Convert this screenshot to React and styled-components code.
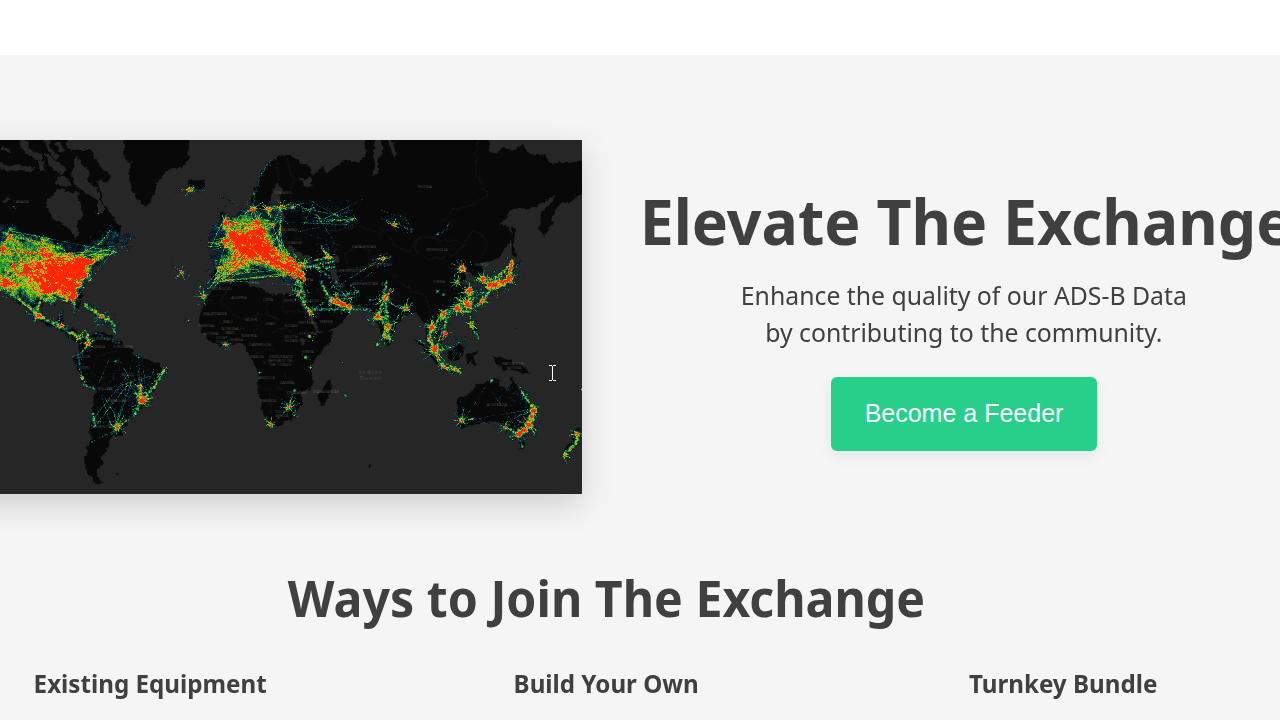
import React from 'react';
import styled, { createGlobalStyle } from 'styled-components';

const GlobalStyle = createGlobalStyle`
  html, body { margin: 0; padding: 0; overflow: hidden; background: #f5f5f5; }
  * { box-sizing: border-box; }
`;

const Page = styled.div`
  width: 100vw;
  height: 100vh;
  overflow: hidden;
  background: #f5f5f5;
  color: #404040;
  font-family: 'Noto Sans', 'Open Sans', sans-serif;
`;

const TopBar = styled.header`
  height: 55px;
  background: #ffffff;
`;

const Container = styled.main`
  width: 1369px;
  margin-left: -78px;
`;

const Hero = styled.section`
  display: flex;
  padding-top: 85px;
  height: 508px;
`;

const MapFrame = styled.figure`
  flex: none;
  width: 660px;
  height: 354px;
  margin: 0;
  padding-left: 78px;
  background: #262626;
  box-shadow: 0 10px 30px rgba(0, 0, 0, 0.16);

  svg { display: block; }
`;

const Pitch = styled.div`
  flex: none;
  width: 764px;
  padding-top: 36px;
  display: flex;
  flex-direction: column;
  align-items: center;
`;

const Title = styled.h1`
  margin: 0;
  font-size: 63.5px;
  line-height: 90px;
  font-weight: 700;
  white-space: nowrap;
  transform: translateX(2px) scaleX(0.957);
`;

const Lead = styled.p`
  margin: 11px 0 26px;
  font-size: 25px;
  line-height: 37px;
  text-align: center;
  transform: scaleX(0.992);
`;

const FeederButton = styled.button`
  width: 266px;
  height: 74px;
  border: 0;
  border-radius: 6px;
  background: #28cf8b;
  color: #ffffff;
  font: 25px/73px 'Liberation Sans', Arial, sans-serif;
  padding: 0 0 1px;
  box-shadow: 0 5px 14px rgba(40, 80, 120, 0.08);
`;

const SectionTitle = styled.h2`
  margin: 0;
  font-size: 50px;
  line-height: 70px;
  font-weight: 700;
  text-align: center;
  transform: scaleX(0.965);
`;

const Ways = styled.div`
  display: grid;
  grid-template-columns: repeat(3, 1fr);
  padding-top: 32px;
`;

const WayTitle = styled.h3`
  margin: 0;
  font-size: 25px;
  line-height: 36px;
  font-weight: 700;
  text-align: center;
  transform: scaleX(0.967);
`;

/* ---------- traffic heat map ---------- */

const W = 582;
const H = 354;
const TOP = 140;

function makeRandom(seed) {
  let s = seed;
  return () => {
    s = (s + 0x6d2b79f5) | 0;
    let t = Math.imul(s ^ (s >>> 15), 1 | s);
    t = (t + Math.imul(t ^ (t >>> 7), 61 | t)) ^ t;
    return ((t ^ (t >>> 14)) >>> 0) / 4294967296;
  };
}

// [value, points]
const AREAS = [
  [0.19, [[0, 222], [20, 228], [50, 238], [75, 246], [95, 240], [108, 225], [120, 234], [116, 246], [108, 258], [95, 272], [85, 285], [82, 303], [60, 300], [45, 300], [40, 315], [20, 303], [0, 285]]],
  [0.28, [[0, 238], [20, 238], [40, 241], [70, 254], [95, 254], [108, 250], [110, 256], [97, 263], [88, 278], [80, 292], [79, 304], [70, 300], [62, 296], [45, 297], [38, 302], [25, 296], [0, 290]]],
  [0.3, [[0, 275], [12, 283], [25, 266], [42, 256], [60, 255], [97, 256], [93, 266], [83, 275], [77, 288], [77, 304], [71, 303], [67, 296], [42, 295], [22, 286], [0, 287]]],
  [0.28, [[22, 270], [34, 264], [50, 260], [75, 258], [96, 258], [90, 268], [82, 275], [76, 288], [77, 304], [72, 303], [68, 294], [42, 292], [38, 280]]],
  [0.5, [[52, 264], [75, 259], [96, 258], [90, 268], [82, 276], [77, 284], [76, 302], [71, 302], [68, 290], [42, 290], [44, 280]]],
  [0.16, [[206, 232], [220, 214], [245, 207], [270, 205], [281, 210], [281, 235], [297, 262], [304, 272], [302, 286], [292, 284], [270, 276], [245, 278], [225, 280], [205, 302], [202, 296], [212, 270], [206, 250]]],
  [0.26, [[220, 226], [226, 218], [240, 216], [258, 214], [274, 226], [276, 240], [296, 262], [302, 276], [294, 278], [275, 270], [252, 268], [236, 272], [220, 280], [214, 280], [216, 268], [226, 254], [226, 240]]],
  [0.3, [[225, 228], [232, 230], [240, 236], [250, 229], [260, 226], [268, 236], [276, 248], [298, 266], [297, 274], [275, 266], [255, 262], [236, 266], [224, 270], [234, 252], [226, 240]]],
  [0.5, [[226, 230], [234, 233], [238, 236], [252, 232], [260, 236], [270, 247], [282, 258], [268, 258], [254, 252], [240, 254], [236, 250], [240, 244], [227, 238]]],
  [0.1, [[295, 205], [350, 198], [356, 220], [350, 232], [300, 226]]],
  [0.1, [[494, 386], [525, 390], [532, 410], [522, 428], [495, 400]]],
  [0.13, [[458, 405], [467, 397], [465, 425], [459, 420]]],
  [0.09, [[100, 370], [155, 366], [148, 390], [120, 425], [98, 418]]],
  [0.14, [[452, 350], [463, 344], [460, 360], [452, 360]]],
  [0.14, [[120, 238], [134, 236], [132, 248], [120, 250]]],
];

// [x, y, radius, peak]
const SPOTS = [
  [10, 229, 3, 0.7], [9, 237, 4, 0.7], [3, 248, 4, 1], [42, 240, 4, 0.7], [42, 249, 4, 0.8], [49, 256, 5, 0.7], [58, 258, 4, 0.8], [13, 266, 4, 0.8], [27, 270, 8, 0.8], [5, 283, 8, 1],
  [38, 315, 5, 1.2], [62, 325, 4, 0.4], [77, 337, 5, 0.5], [87, 343, 4, 0.8], [101, 316, 4, 0.8], [82, 378, 3, 0.7], [94, 420, 2.5, 0.6], [117, 426, 6, 0.7], [141, 400, 6, 1.3], [139, 387, 4, 0.6], [138, 357, 2, 0.5], [115, 361, 2, 0.6], [122, 385, 2, 0.4],
  [13, 206, 2, 0.45], [98, 213, 2, 0.4], [189, 189, 4, 0.7], [181, 272, 4, 0.5], [188, 320, 2, 0.5], [203, 296, 5, 0.8], [200, 286, 2, 0.6],
  [225, 222, 5, 0.7], [231, 233, 8, 0.8], [257, 222, 6, 0.7], [253, 208, 5, 0.6], [268, 209, 5, 0.7], [281, 207, 4, 0.5], [292, 207, 3, 0.8], [254, 193, 2, 0.6], [261, 173, 2, 0.4],
  [310, 312, 4, 0.8], [340, 303, 6, 0.8], [348, 306, 4, 0.7], [336, 299, 5, 0.7], [298, 292, 5, 0.5], [327, 255, 4, 0.4], [321, 221, 2, 0.5], [352, 219, 3, 0.5], [302, 264, 7, 0.5],
  [385, 297, 6, 0.8], [377, 316, 6, 0.9], [387, 326, 6, 0.85], [377, 344, 3, 0.7], [384, 336, 5, 0.45], [405, 308, 5, 0.7], [383, 258, 4, 0.5], [393, 224, 4, 0.55],
  [462, 268, 6, 0.85], [457, 282, 4, 0.7], [469, 291, 6, 1.1], [457, 307, 6, 1.1], [467, 304, 7, 0.9], [443, 313, 5, 0.7], [482, 278, 6, 1], [482, 300, 5, 0.7], [508, 278, 5, 0.8], [496, 283, 7, 0.8],
  [432, 327, 6, 0.9], [444, 332, 4, 0.8], [471, 324, 4, 0.8], [435, 350, 8, 1.05], [443, 366, 4, 0.8], [456, 369, 4, 0.5],
  [491, 380, 3, 0.6], [533, 410, 5, 1.1], [529, 425, 6, 1.1], [518, 434, 5, 1.1], [505, 427, 4, 0.7], [461, 420, 5, 0.7], [472, 418, 2, 0.4], [522, 446, 3, 0.5], [577, 433, 4, 0.9], [563, 455, 4, 0.4], [581, 389, 2, 0.6],
  [288, 407, 6, 0.55], [270, 424, 4, 0.7], [294, 390, 3, 0.5], [305, 357, 3, 0.6], [309, 336, 3, 0.6], [310, 367, 2, 0.6], [259, 372, 2, 0.5], [225, 343, 4, 0.4], [294, 415, 2, 0.5], [345, 395, 3, 0.4], [342, 362, 2, 0.4], [264, 362, 3, 0.25],
  [437, 234, 2, 0.6], [437, 291, 2, 0.6], [443, 294, 3, 0.4], [516, 327, 3, 0.2],
];

// [width, peak, points]
const ROUTES = [
  [2, 0.6, [[2, 232], [30, 240], [60, 248], [75, 258]]], [1.5, 0.5, [[75, 256], [100, 242], [110, 230]]], [2, 0.5, [[90, 260], [118, 250]]],
  [3, 0.5, [[3, 285], [20, 300], [38, 315]]], [3, 0.45, [[42, 296], [34, 312]]], [2, 0.35, [[40, 318], [26, 312]]], [3, 0.45, [[40, 317], [60, 326], [80, 338]]], [2, 0.35, [[62, 310], [56, 325]]],
  [2, 0.42, [[74, 300], [74, 315]]], [3, 0.5, [[84, 304], [100, 315], [112, 322], [115, 332]]], [3, 0.75, [[86, 333], [87, 345]]], [3, 0.2, [[95, 325], [108, 325]]], [3, 0.2, [[90, 332], [118, 342]]],
  [2, 0.38, [[87, 345], [78, 355], [80, 372], [84, 384], [94, 389]]], [2, 0.55, [[93, 412], [94, 426]]], [1.5, 0.22, [[94, 427], [91, 442], [118, 428]]], [1.5, 0.25, [[94, 420], [117, 426]]],
  [2.5, 0.58, [[141, 400], [152, 388], [164, 368]]], [3, 0.6, [[139, 385], [141, 400]]], [2.5, 0.6, [[141, 400], [133, 416]]], [2, 0.6, [[141, 400], [152, 397]]], [2, 0.32, [[133, 416], [117, 426]]], [1.5, 0.25, [[138, 357], [139, 385]]], [1.2, 0.2, [[141, 400], [114, 361]]], [1.2, 0.2, [[141, 400], [108, 388]]], [1.2, 0.2, [[157, 362], [140, 398]]], [1.2, 0.2, [[139, 386], [120, 385]]],
  [1, 0.35, [[176, 190], [203, 191]]], [1, 0.25, [[170, 263], [186, 275]]], [1, 0.25, [[120, 242], [135, 237]]], [1, 0.25, [[121, 246], [135, 244]]], [1, 0.25, [[122, 250], [130, 250]]],
  [1.5, 0.3, [[253, 209], [254, 193], [261, 173], [270, 160]]], [1.3, 0.25, [[218, 195], [235, 203], [245, 213]]], [1.5, 0.5, [[268, 207], [295, 207]]], [1.5, 0.5, [[281, 205], [275, 218], [273, 228]]], [1.5, 0.45, [[281, 207], [279, 232], [274, 240]]],
  [3, 0.65, [[281, 252], [298, 266], [304, 280]]], [2, 0.48, [[304, 266], [320, 267], [334, 267]]], [2, 0.4, [[303, 268], [318, 264], [334, 261]]], [3, 0.4, [[294, 276], [302, 290], [304, 303]]],
  [2, 0.65, [[320, 245], [325, 252], [329, 258]]], [2, 0.5, [[314, 259], [332, 257]]], [1.5, 0.3, [[335, 248], [332, 262]]],
  [2, 0.38, [[317, 269], [328, 276], [336, 282]]], [2.5, 0.62, [[320, 281], [325, 290], [332, 299]]], [4, 0.85, [[330, 299], [340, 303], [351, 306]]], [2, 0.48, [[308, 309], [335, 309], [370, 309]]], [2, 0.5, [[295, 288], [308, 310]]], [1.5, 0.4, [[323, 302], [310, 311]]], [1.5, 0.4, [[332, 285], [350, 298], [336, 298]]], [2, 0.3, [[336, 295], [358, 292], [350, 284]]],
  [1.5, 0.4, [[385, 297], [369, 300]]], [2, 0.6, [[385, 297], [377, 316]]], [2.5, 0.5, [[385, 297], [386, 326]]], [2.5, 0.52, [[377, 316], [387, 328], [390, 341]]], [1.5, 0.45, [[385, 297], [395, 306], [407, 309]]], [1.5, 0.4, [[405, 308], [388, 326]]], [2, 0.25, [[405, 308], [413, 302]]], [2, 0.45, [[386, 280], [383, 297]]], [2, 0.25, [[370, 260], [391, 256]]],
  [2, 0.2, [[382, 210], [405, 218], [412, 230]]], [2, 0.22, [[380, 218], [400, 224], [412, 232]]], [1.5, 0.35, [[314, 221], [335, 220], [354, 219]]], [1.2, 0.22, [[325, 217], [352, 210]]], [1.2, 0.25, [[440, 233], [446, 228], [449, 221]]],
  [4, 0.95, [[488, 285], [500, 283], [509, 280]]], [3, 0.6, [[486, 288], [500, 286], [510, 279], [511, 262]]], [3, 0.8, [[507, 280], [512, 260]]], [2.5, 0.5, [[483, 283], [500, 274], [510, 264]]], [1.5, 0.35, [[511, 277], [520, 273]]], [1.5, 0.33, [[510, 272], [519, 261]]], [2, 0.55, [[476, 307], [486, 294], [492, 288]]], [2.5, 0.8, [[467, 306], [470, 290]]], [2.5, 0.48, [[463, 306], [448, 310], [440, 317], [446, 320], [449, 311]]], [2, 0.5, [[467, 303], [483, 291]]], [2, 0.5, [[470, 301], [471, 326], [478, 338]]], [2.5, 0.5, [[455, 310], [469, 311]]],
  [2.5, 0.55, [[443, 312], [445, 321], [444, 333]]], [2, 0.52, [[432, 326], [443, 312]]], [3, 0.6, [[432, 326], [429, 338], [435, 350]]], [2, 0.4, [[424, 325], [442, 330]]], [1.5, 0.35, [[418, 340], [435, 351], [443, 366]]], [2.5, 0.52, [[436, 354], [443, 366], [461, 372]]], [2, 0.35, [[437, 350], [452, 346], [464, 339]]], [1.5, 0.3, [[433, 355], [448, 343]]], [2, 0.4, [[459, 372], [447, 364]]],
  [2, 0.52, [[519, 387], [525, 397], [532, 407]]], [4, 0.7, [[533, 406], [532, 418], [526, 428], [518, 434]]], [2, 0.5, [[505, 427], [518, 434], [529, 425]]], [2.5, 0.3, [[518, 434], [522, 446]]], [3, 0.55, [[578, 433], [574, 445], [563, 455]]], [2, 0.3, [[570, 430], [580, 434]]],
  [1.2, 0.38, [[288, 407], [294, 390]]], [1.2, 0.25, [[288, 407], [271, 424]]], [1.2, 0.25, [[288, 407], [294, 416]]], [1.2, 0.3, [[280, 402], [296, 411]]],
];

// [count, peak, points the routes are drawn between]
const WEBS = [
  [110, 0.3, [[227, 222], [231, 234], [245, 235], [253, 226], [262, 232], [250, 250], [234, 262], [218, 272], [212, 284], [222, 280], [256, 265], [275, 262], [285, 272], [296, 270], [300, 280], [270, 240], [276, 225], [212, 246]]],
  [30, 0.28, [[228, 232], [238, 240], [258, 234], [296, 270], [302, 280], [288, 262]]],
  [46, 0.3, [[5, 283], [14, 266], [27, 270], [42, 250], [60, 260], [90, 260], [75, 300], [42, 295], [2, 250], [9, 236], [112, 250], [40, 276]]],
  [18, 0.2, [[296, 207], [318, 221], [352, 219], [365, 195], [300, 230], [340, 240], [285, 220], [310, 205]]],
  [12, 0.2, [[141, 400], [94, 418], [117, 426], [114, 361], [138, 357], [130, 378], [100, 390], [163, 368]]],
  [12, 0.2, [[461, 418], [491, 382], [533, 408], [518, 434], [505, 427], [508, 392]]],
  [14, 0.2, [[320, 281], [336, 268], [350, 300], [383, 258], [383, 297], [340, 285], [360, 290]]],
  [8, 0.2, [[435, 350], [455, 355], [418, 338], [464, 340], [443, 366]]],
];

const PALETTE = [
  [0.12, '#0a1a28'], [0.19, '#0c3244'], [0.26, '#12564c'], [0.34, '#1c8038'], [0.46, '#45ab22'],
  [0.6, '#98c21a'], [0.76, '#dcae10'], [0.9, '#f37409'], [1.02, '#ff2606'],
];

function inside(poly, x, y) {
  let hit = false;
  for (let i = 0, j = poly.length - 1; i < poly.length; j = i++) {
    const [xi, yi] = poly[i];
    const [xj, yj] = poly[j];
    if (yi > y !== yj > y && x < ((xj - xi) * (y - yi)) / (yj - yi) + xi) hit = !hit;
  }
  return hit;
}

function blurField(src) {
  const out = new Float32Array(src.length);
  for (let y = 0; y < H; y++) {
    for (let x = 0; x < W; x++) {
      let sum = 0;
      for (let dy = -2; dy <= 2; dy++) {
        for (let dx = -2; dx <= 2; dx++) {
          const yy = Math.min(H - 1, Math.max(0, y + dy));
          const xx = Math.min(W - 1, Math.max(0, x + dx));
          sum += src[yy * W + xx];
        }
      }
      out[y * W + x] = sum / 25;
    }
  }
  return out;
}

function makeSmoothNoise(rnd, cell) {
  const cols = Math.ceil(W / cell) + 2;
  const grid = Array.from({ length: cols * (Math.ceil(H / cell) + 2) }, () => rnd());
  return (x, y) => {
    const gx = x / cell;
    const gy = y / cell;
    const ix = Math.floor(gx);
    const iy = Math.floor(gy);
    const fx = gx - ix;
    const fy = gy - iy;
    const at = (u, v) => grid[v * cols + u];
    return (at(ix, iy) * (1 - fx) + at(ix + 1, iy) * fx) * (1 - fy) + (at(ix, iy + 1) * (1 - fx) + at(ix + 1, iy + 1) * fx) * fy;
  };
}

function buildHeat() {
  const rnd = makeRandom(41);
  let areas = new Float32Array(W * H);

  AREAS.forEach(([value, poly]) => {
    for (let y = 0; y < H; y++) {
      for (let x = 0; x < W; x++) {
        if (inside(poly, x + 0.5, y + TOP + 0.5)) areas[y * W + x] += value;
      }
    }
  });
  areas = blurField(areas);

  // break up the outlines of the areas
  const warpX = makeSmoothNoise(rnd, 5);
  const warpY = makeSmoothNoise(rnd, 5);
  const field = new Float32Array(W * H);
  for (let y = 0; y < H; y++) {
    for (let x = 0; x < W; x++) {
      const sx = Math.round(x + (warpX(x, y) - 0.5) * 14 + (rnd() - 0.5) * 3);
      const sy = Math.round(y + (warpY(x, y) - 0.5) * 14 + (rnd() - 0.5) * 3);
      field[y * W + x] = areas[Math.min(H - 1, Math.max(0, sy)) * W + Math.min(W - 1, Math.max(0, sx))];
    }
  }

  const dab = (cx, cy, r, peak) => {
    const reach = Math.ceil(r * 1.7);
    for (let y = Math.floor(cy - reach); y <= cy + reach; y++) {
      for (let x = Math.floor(cx - reach); x <= cx + reach; x++) {
        if (x < 0 || x >= W || y < 0 || y >= H) continue;
        const d = ((x - cx) ** 2 + (y - cy) ** 2) / (r * r);
        const v = peak * Math.exp(-d * 1.6);
        const i = y * W + x;
        if (v > 0.03) field[i] = Math.max(field[i], Math.min(1.5, field[i] * 0.6 + v));
      }
    }
  };

  const thread = (ax, ay, bx, by, peak) => {
    const steps = Math.ceil(Math.hypot(bx - ax, by - ay));
    for (let k = 0; k < steps; k++) {
      const x = Math.round(ax + ((bx - ax) * k) / steps);
      const y = Math.round(ay + ((by - ay) * k) / steps) - TOP;
      if (x >= 0 && x < W && y >= 0 && y < H) field[y * W + x] += peak * (0.3 + rnd() * 0.7);
    }
  };

  SPOTS.forEach(([x, y, r, peak]) => {
    dab(x, y - TOP, r * 0.7, peak * 1.15);
    for (let k = 0; k < r * 6; k++) {
      const a = rnd() * Math.PI * 2;
      const d = r * (0.5 + rnd() * 1.4);
      dab(x + Math.cos(a) * d, y - TOP + Math.sin(a) * d, 0.9, 0.5 * rnd() * Math.min(1, peak));
    }
    if (r >= 4) {
      for (let k = 0; k < r * 1.6; k++) {
        const a = rnd() * Math.PI * 2;
        const d = r * (1 + rnd() * 1.4);
        thread(x, y, x + Math.cos(a) * d, y + Math.sin(a) * d, 0.4);
      }
    }
  });

  ROUTES.forEach(([w, peak, pts]) => {
    for (let i = 1; i < pts.length; i++) {
      const [x0, y0] = pts[i - 1];
      const [x1, y1] = pts[i];
      const steps = Math.ceil(Math.hypot(x1 - x0, y1 - y0));
      for (let k = 0; k <= steps; k++) {
        const t = k / Math.max(1, steps);
        const x = x0 + (x1 - x0) * t;
        const y = y0 + (y1 - y0) * t - TOP;
        dab(x + (rnd() - 0.5) * w, y + (rnd() - 0.5) * w, w * 0.6, peak * (0.55 + rnd() * 0.6));
        for (let n = 0; n < 2; n++) {
          dab(x + (rnd() - 0.5) * w * 4.5, y + (rnd() - 0.5) * w * 4.5, 0.9, 0.45 * rnd() * (peak + 0.2));
        }
      }
    }
  });

  WEBS.forEach(([count, peak, pts]) => {
    for (let n = 0; n < count; n++) {
      const a = pts[Math.floor(rnd() * pts.length)];
      const b = pts[Math.floor(rnd() * pts.length)];
      const shake = () => (rnd() - 0.5) * 12;
      thread(a[0] + shake(), a[1] + shake(), b[0] + shake(), b[1] + shake(), peak);
    }
  });

  const grain = makeSmoothNoise(rnd, 2.5);
  const paths = PALETTE.map(() => '');
  for (let y = 0; y < H; y++) {
    let run = -1;
    let start = 0;
    for (let x = 0; x <= W; x++) {
      let level = -1;
      if (x < W) {
        const v = field[y * W + x] * (0.3 + 0.95 * grain(x, y) + 0.45 * rnd());
        for (let k = 0; k < PALETTE.length; k++) if (v > PALETTE[k][0]) level = k;
      }
      if (level !== run) {
        if (run >= 0) paths[run] += `M${start} ${y + TOP}h${x - start}v1H${start}z`;
        run = level;
        start = x;
      }
    }
  }
  return paths;
}

const HEAT = buildHeat();

/* ---------- base map ---------- */

const LAND = [
  '0,136 66,136 67,148 75,150 90,150 100,166 111,177 107,182 95,180 102,193 103,203 107,210 115,220 122,230 118,243 110,247 100,257 96,264 88,274 82,284 82,303 79,308 73,304 70,297 45,297 40,305 40,316 47,324 56,322 62,312 64,314 61,326 75,330 78,340 87,346 84,348 70,338 58,329 40,322 25,308 12,293 -4,284 -4,136',
  '123,136 190,136 188,160 182,167 167,170 158,182 153,197 147,207 138,202 132,190 128,173 132,163 125,160',
  '187,183 195,179 205,181 205,187 197,190 190,189',
  '83,337 97,332 112,335 120,342 133,350 135,357 150,360 160,365 163,372 157,382 150,397 143,407 133,413 127,425 120,430 122,435 110,438 108,447 100,457 103,463 98,470 97,477 104,484 95,483 87,473 85,457 90,437 92,413 95,390 83,382 78,370 74,360 78,352',
  '278,157 285,154 293,157 300,162 310,168 313,176 305,180 299,178 305,187 313,185 310,178 318,172 322,166 327,174 337,165 347,160 357,162 363,158 366,150 365,136 487,136 490,150 497,153 502,148 513,150 523,145 530,153 543,155 550,163 567,163 586,160 586,192 570,202 560,204 554,212 552,223 543,237 539,227 540,215 550,203 556,195 549,198 542,202 535,208 513,209 508,216 500,225 509,227 512,238 502,255 495,260 480,263 485,273 484,285 478,281 472,272 463,272 465,277 462,283 469,288 468,300 460,310 443,317 442,322 447,330 443,337 437,335 432,330 430,343 437,352 440,359 433,353 427,343 426,330 422,318 415,313 405,315 398,325 392,335 389,346 384,340 379,328 376,316 370,309 355,305 345,306 337,300 325,289 327,298 335,306 345,307 351,313 340,325 325,333 317,330 308,312 300,290 303,283 295,282 288,275 284,283 278,275 268,262 258,255 262,265 270,274 262,273 250,262 242,262 235,265 232,275 220,283 210,285 212,270 228,268 225,257 218,252 230,248 245,238 255,232 254,222 260,222 262,230 275,228 283,222 285,210 300,206 288,203 281,207 280,198 282,190 278,182 273,190 270,202 272,210 263,213 258,208 253,210 250,202 253,193 260,177 268,163',
  '220,283 235,280 249,280 250,287 262,288 270,295 285,293 297,295 303,306 310,318 318,333 333,331 331,340 320,353 311,367 313,385 302,393 302,404 293,417 280,426 268,426 262,407 257,390 259,377 255,363 247,352 245,345 237,343 223,346 213,343 202,332 199,320 203,302 213,290',
  '330,378 332,389 325,405 320,406 318,398 322,388',
  '220,212 229,213 227,222 235,236 228,240 226,229 220,221',
  '457,400 470,393 477,385 487,382 493,378 500,380 499,386 508,390 512,377 517,387 524,397 533,407 534,414 527,426 518,435 510,432 503,425 493,421 480,423 470,426 461,429 460,420 457,407',
  '519,441 525,443 523,449 519,447',
  '491,356 505,359 515,363 524,367 530,375 518,371 505,369 497,364',
  '414,339 424,345 438,359 443,366 437,364 424,350',
  '448,354 460,343 465,349 460,360 452,361',
  '443,365 455,369 463,372 459,374 444,369',
  '467,353 477,351 478,353 472,356 476,364 473,365 470,360 468,366 466,360',
  '512,225 515,228 514,245 517,258 512,255 511,240',
  '486,287 500,283 508,279 510,266 518,262 512,281 496,289',
  '469,322 474,323 479,337 473,332',
  '578,427 581,436 573,449 562,457 568,446 575,437',
  '553,393 560,400 557,397',
  '114,472 119,472 117,475',
  '368,464 372,465 369,467',
];

const WATER = [
  '63,188 55,192 48,200 47,208 52,217 60,223 67,225 72,232 75,238 79,235 77,225 82,217 82,207 77,200 80,193 75,190 72,195 67,191',
  '75,158 82,163 90,172 87,180 95,188 100,192 99,200 103,205 103,212 98,212 98,201 84,192 75,186 72,176',
  '-4,160 10,166 22,165 34,168 31,171 20,170 8,172 -4,167',
  '20,140 26,140 32,152 43,155 40,160 30,156 22,150',
  '45,152 57,160 66,168 62,175 52,168 47,162',
  '44,138 49,138 51,150 60,156 56,159 48,152',
  '58,176 66,178 71,183 66,187 56,183',
  '3,200 8,198 11,201 5,203',
  '2,147 12,150 10,152 2,150',
  '38,160 44,161 45,171 40,170',
  '53,143 60,143 64,151 60,150',
  '281,248 290,245 297,252 310,257 313,263 297,263 287,260',
  '330,258 337,255 340,261 333,264 337,273 338,283 333,280 330,270',
  '334,136 343,136 347,150 353,160 346,160 337,155 334,147',
  '375,136 380,136 383,152 377,162 380,173 372,176 375,168 374,155',
  '386,136 394,143 397,156 394,158 390,147',
  '300,297 305,303 318,326 316,330 307,314 302,305',
  '300,340 304,338 305,343 302,345',
];

const BORDERS = [
  'M478 140l-3 22 4 18 9 14-16 11-18 5-12 12',
  'M415 240l12-4 14 5 13-1 10 5-8 8-12 4-16 2-12-7z',
  'M464 245l8-14 9 2 6 12-4 10',
  'M378 226l9 7 8 14 14 4 6-10M345 255l12-9 14 5 12 12-14 5-20 1z',
  'M337 250l-8-16 8-10 22 2 22 8',
  'M230 285l-10 17 22 18 17-6 20 5M267 294v21M283 294v18h18M200 315h20M222 333l22-5M258 314l-4 22',
  'M272 333l12-5 14 7M252 355l18-6 14 10 10 3M258 388h25M284 373l10 12M270 391v22M285 391l6 12M300 366l10 6',
  'M275 160l5 20M287 158l6 20-3 24M294 240l16-6M310 263l15 15 10 3M326 310l14 8',
  'M88 348l8 9 12-4 10-4M96 358l-4 16 12 6M98 388l10-3 9 11-8 14M97 400l3 38',
  'M383 258l12 20 18 14 16 4M386 296l12 6M426 300l8 20',
];

// [x, y, text]
const COUNTRIES = [
  [21, 203, 'CANADA'], [425, 188, 'RUSSIA'], [364, 248, 'KAZAKHSTAN'], [437, 251, 'MONGOLIA'], [439, 283, 'CHINA'],
  [294, 244, 'UKRAINE'], [283, 194, 'FINLAND'], [289, 231, 'BELARUS'], [350, 272, 'TURKMENISTAN'], [380, 266, 'KYRGYZSTAN'], [365, 285, 'AFGHANISTAN'], [340, 287, 'IRAN'], [308, 281, 'SYRIA'], [313, 302, 'SAUDI'],
  [239, 299, 'ALGERIA'], [268, 301, 'LIBYA'], [290, 302, 'EGYPT'], [222, 290, 'MOROCCO'], [252, 284, 'TUNISIA'], [215, 315, 'MAURITANIA'], [251, 321, 'NIGER'], [228, 323, 'MALI'],
  [270, 325, 'CHAD'], [291, 327, 'SUDAN'], [306, 324, 'ERITREA'], [326, 323, 'YEMEN'], [207, 327, 'SENEGAL'], [211, 335, 'GUINEA'], [230, 330, 'BURKINA'], [230, 334, 'FASO'], [222, 339, 'IVORY'], [222, 343, 'COAST'], [236, 341, 'GHANA'],
  [249, 337, 'NIGERIA'], [291, 338, 'SOUTH'], [291, 342, 'SUDAN'], [308, 335, 'ETHIOPIA'], [260, 346, 'CAMEROON'], [257, 358, 'GABON'], [281, 358, 'DEMOCRATIC'], [280, 362, 'REPUBLIC OF'], [280, 366, 'THE CONGO'],
  [308, 353, 'KENYA'], [267, 379, 'ANGOLA'], [287, 384, 'ZAMBIA'], [297, 394, 'ZIMBABWE'], [268, 402, 'NAMIBIA'], [282, 413, 'SOUTH'], [282, 417, 'AFRICA'], [326, 393, 'MADAGASCAR'],
  [104, 340, 'VENEZUELA'], [95, 348, 'COLOMBIA'], [123, 348, 'SURINAME'], [81, 358, 'ECUADOR'], [85, 369, 'PERU'], [128, 376, 'BRAZIL'], [105, 390, 'BOLIVIA'], [118, 402, 'PARAGUAY'], [103, 428, 'ARGENTINA'],
  [497, 406, 'AUSTRALIA'], [513, 365, 'PAPUA NEW'], [514, 369, 'GUINEA'], [482, 266, 'NORTH'], [388, 292, 'NEPAL'],
];

const TrafficMap = () => (
  <svg width={W} height={H} viewBox={`0 ${TOP} ${W} ${H}`} role="img" aria-label="World air traffic coverage">
    <defs>
      <filter id="coast" x="-6" y="134" width="594" height="366" filterUnits="userSpaceOnUse" colorInterpolationFilters="sRGB">
        <feTurbulence type="fractalNoise" baseFrequency="0.16" numOctaves="3" seed="7" result="n" />
        <feDisplacementMap in="SourceGraphic" in2="n" scale="6" xChannelSelector="R" yChannelSelector="G" />
        <feGaussianBlur stdDeviation="0.35" />
      </filter>
      <filter id="soften" x="-5%" y="-5%" width="110%" height="110%" colorInterpolationFilters="sRGB">
        <feGaussianBlur stdDeviation="0.5" />
      </filter>
    </defs>
    <rect x="0" y="140" width="582" height="354" fill="#262626" />
    <g filter="url(#coast)">
      {LAND.map((p) => <polygon key={p} points={p} fill="#080808" />)}
      {WATER.map((p) => <polygon key={p} points={p} fill="#262626" />)}
      {BORDERS.map((d) => <path key={d} d={d} fill="none" stroke="#191919" strokeWidth="0.7" />)}
    </g>
    <g filter="url(#soften)">
      {HEAT.map((d, i) => <path key={PALETTE[i][1]} d={d} fill={PALETTE[i][1]} />)}
    </g>
    <g fill="#808080" fillOpacity="0.5" fontFamily="'Noto Sans', sans-serif" fontSize="3.9" textAnchor="middle">
      {COUNTRIES.map(([x, y, name], i) => <text key={i} x={x} y={y}>{name}</text>)}
      <g fontSize="6" letterSpacing="1" fillOpacity="0.35">
        <text x="371" y="374">Indian</text>
        <text x="371" y="380">Ocean</text>
      </g>
    </g>
    <path d="M549 365.5h3M553 365.5h3M552.5 366v14M549 380.5h3M553 380.5h3" stroke="#fff" strokeWidth="1" fill="none" />
  </svg>
);

const WAYS = ['Existing Equipment', 'Build Your Own', 'Turnkey Bundle'];

export default function App() {
  return (
    <Page>
      <GlobalStyle />
      <TopBar />
      <Container>
        <Hero>
          <MapFrame>
            <TrafficMap />
          </MapFrame>
          <Pitch>
            <Title>Elevate The Exchange</Title>
            <Lead>
              Enhance the quality of our ADS-B Data
              <br />
              by contributing to the community.
            </Lead>
            <FeederButton>Become a Feeder</FeederButton>
          </Pitch>
        </Hero>
        <SectionTitle>Ways to Join The Exchange</SectionTitle>
        <Ways>
          {WAYS.map((w) => <WayTitle key={w}>{w}</WayTitle>)}
        </Ways>
      </Container>
    </Page>
  );
}
